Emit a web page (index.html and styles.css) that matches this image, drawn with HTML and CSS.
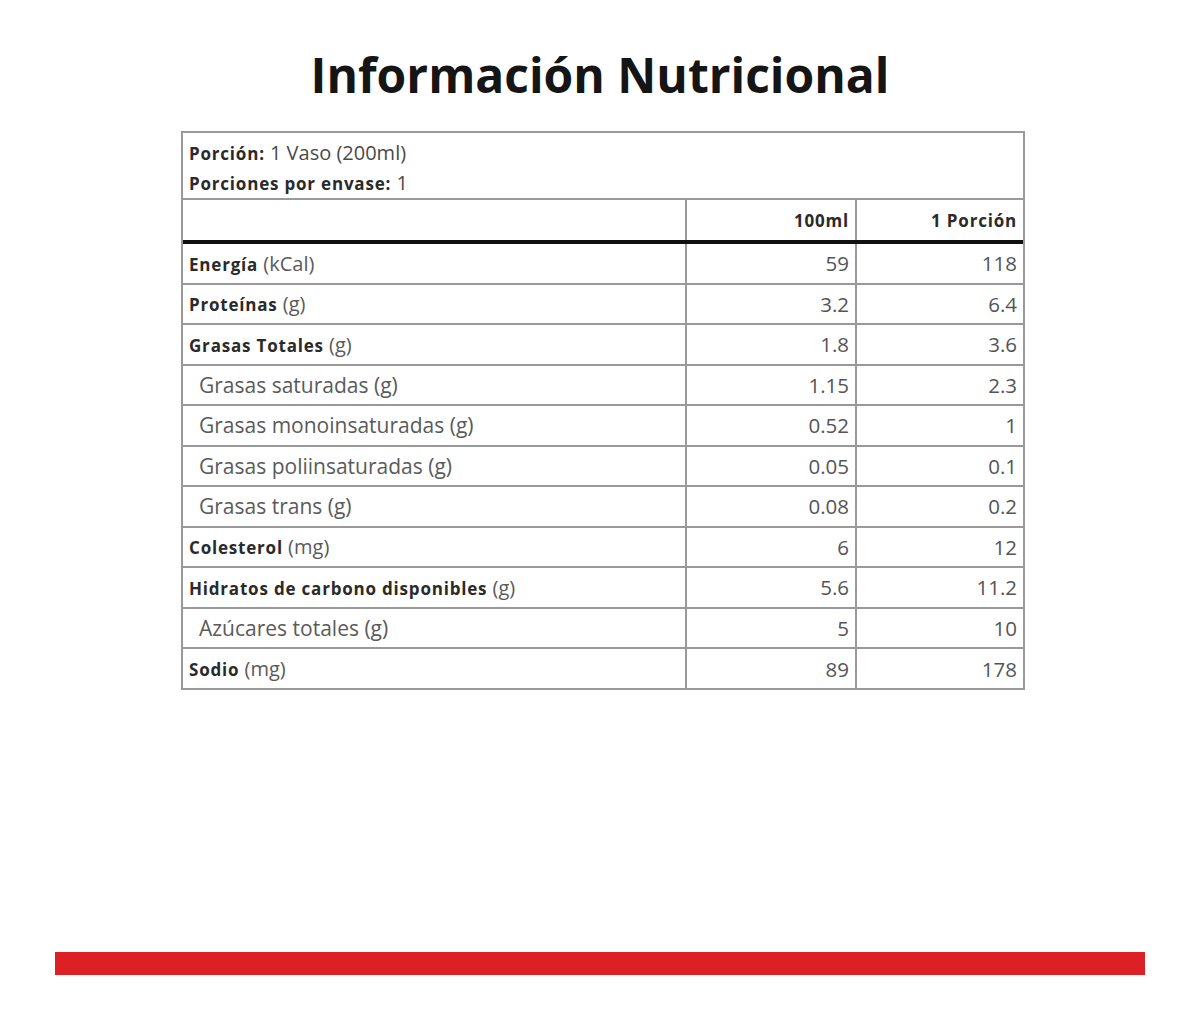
FILE: index.html
```html
<!DOCTYPE html>
<html lang="es">
<head>
<meta charset="utf-8">
<title>Información Nutricional</title>
<link rel="stylesheet" href="styles.css">
</head>
<body>
<div class="page">
  <h1 class="title">Información Nutricional</h1>
  <div class="label">
    <div class="serving">
      <div><b>Porción:</b> 1 Vaso (200ml)</div>
      <div><b>Porciones por envase:</b> 1</div>
    </div>
    <div class="row head">
      <div class="c name"></div>
      <div class="c num"><b>100ml</b></div>
      <div class="c num"><b>1 Porción</b></div>
    </div>
    <div class="row"><div class="c name"><span><b>Energía</b> (kCal)</span></div><div class="c num">59</div><div class="c num">118</div></div>
    <div class="row"><div class="c name"><span><b>Proteínas</b> (g)</span></div><div class="c num">3.2</div><div class="c num">6.4</div></div>
    <div class="row"><div class="c name"><span><b>Grasas Totales</b> (g)</span></div><div class="c num">1.8</div><div class="c num">3.6</div></div>
    <div class="row"><div class="c name sub">Grasas saturadas (g)</div><div class="c num">1.15</div><div class="c num">2.3</div></div>
    <div class="row"><div class="c name sub">Grasas monoinsaturadas (g)</div><div class="c num">0.52</div><div class="c num">1</div></div>
    <div class="row"><div class="c name sub">Grasas poliinsaturadas (g)</div><div class="c num">0.05</div><div class="c num">0.1</div></div>
    <div class="row"><div class="c name sub">Grasas trans (g)</div><div class="c num">0.08</div><div class="c num">0.2</div></div>
    <div class="row"><div class="c name"><span><b>Colesterol</b> (mg)</span></div><div class="c num">6</div><div class="c num">12</div></div>
    <div class="row"><div class="c name"><span><b>Hidratos de carbono disponibles</b> (g)</span></div><div class="c num">5.6</div><div class="c num">11.2</div></div>
    <div class="row"><div class="c name sub">Azúcares totales (g)</div><div class="c num">5</div><div class="c num">10</div></div>
    <div class="row last"><div class="c name"><span><b>Sodio</b> (mg)</span></div><div class="c num">89</div><div class="c num">178</div></div>
  </div>
  <div class="redbar"></div>
</div>
</body>
</html>
```
FILE: styles.css
```css
html, body {
  margin: 0;
  padding: 0;
  background: #fff;
}
body {
  font-family: "Open Sans", "Noto Sans", sans-serif;
  color: #222;
}
.page {
  width: 1200px;
  height: 1022px;
  display: flex;
  flex-direction: column;
}
.title {
  margin: 44px 0 0 0;
  text-align: center;
  font-size: 48px;
  font-weight: 700;
  line-height: 62px;
  color: #151515;
  letter-spacing: 0;
}
.label {
  margin: 25px 0 0 181px;
  width: 840px;
  border: 2px solid #999;
}
.serving {
  height: 67px;
  padding: 5px 0 0 6px;
  box-sizing: border-box;
  font-size: 20px;
  line-height: 29px;
  color: #4a4a4a;
  border-bottom: 2px solid #999;
}
b {
  font-size: 17px;
  font-weight: 700;
  letter-spacing: 0.8px;
  color: #2a2a2a;
}
.row {
  display: grid;
  grid-template-columns: 502px 170px 168px;
  height: 40.5px;
  border-bottom: 2px solid #999;
  box-sizing: border-box;
}
.row.head {
  height: 44px;
  border-bottom: 4px solid #111;
}
.row.last {
  border-bottom: none;
  height: 39px;
}
.c {
  display: flex;
  align-items: center;
  font-size: 20.5px;
  color: #555;
}
.c + .c {
  border-left: 2px solid #999;
}
.name {
  padding-left: 6px;
  font-size: 20px;
  color: #5a5a5a;
}
.name.sub {
  padding-left: 16px;
  font-size: 21px;
}
.num {
  justify-content: flex-end;
  padding-right: 6px;
}
.redbar {
  margin: 262px 0 0 55px;
  width: 1090px;
  height: 23px;
  background: #dd1f26;
}
```
